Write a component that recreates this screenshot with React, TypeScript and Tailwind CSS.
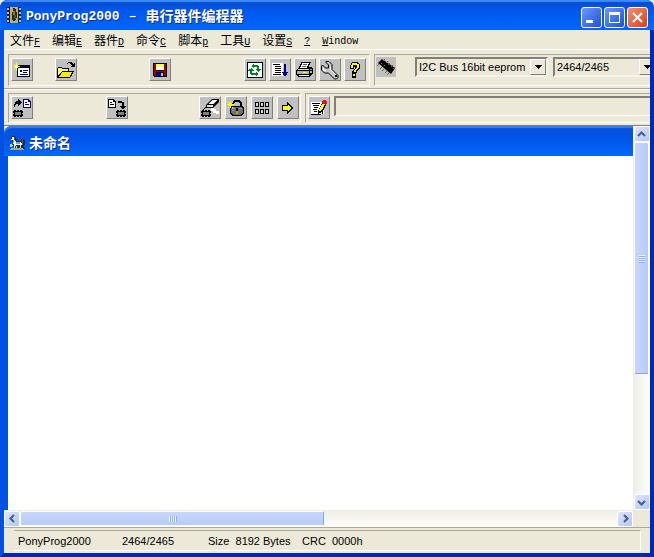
import React, { useState } from 'react';

const Icon: React.FC<{ children: React.ReactNode }> = ({ children }) => (
  <svg viewBox="0 0 20 20" className="h-5 w-5 shrink-0" shapeRendering="crispEdges" aria-hidden="true">
    {children}
  </svg>
);

const ToolButton: React.FC<{ label: string; className?: string; children: React.ReactNode }> = ({ label, className = '', children }) => (
  <button
    type="button"
    aria-label={label}
    className={`flex h-[23px] w-[22px] shrink-0 items-center justify-center border border-t-white border-l-white border-r-[#808080] border-b-[#808080] bg-[#c0c0c0] active:border-[#808080] ${className}`}
  >
    <Icon>{children}</Icon>
  </button>
);

// small IC package, shared by the read / write / erase icons
const Chip: React.FC<{ x: number; y: number }> = ({ x, y }) => (
  <g transform={`translate(${x} ${y})`}>
    <path d="M1 0h2v1h1v-1h2v1h1v-1h2v1h1v2h-1v1h1v2h-1v1h-2v-1h-1v1h-2v-1h-1v1h-2v-1h-1v-2h1v-1h-1v-2h1z" fill="#000" />
    <path d="M2 2h6v3h-6z" fill="#808080" />
  </g>
);

const Page: React.FC<{ x: number; y: number; color: string }> = ({ x, y, color }) => (
  <g transform={`translate(${x} ${y})`}>
    <path d="M0 0h5l3 3v6h-8z" fill={color} />
    <path d="M1 1h4v2h2v5h-6z" fill="#fff" />
    <path d="M2 3h2v1h-2zM2 5h4v1h-4z" fill={color} />
  </g>
);

const NewIcon = () => (
  <>
    <path d="M5 5h13v12h-13z" fill="#000" />
    <path d="M6 8h11v8h-11z" fill="#fff" />
    <path d="M6 6h11v1h-11z" fill="#000080" />
    <path d="M8 10h2v2h-2zM11 10h5v1h-5zM11 12h4v1h-4zM8 14h8v1h-8z" fill="#000060" />
    <path d="M4 2h1v9h-1zM1 6h7v1h-7zM2 4h1v1h-1zM6 4h1v1h-1zM2 8h1v1h-1zM6 8h1v1h-1z" fill="#ffff00" />
    <path d="M3 5h3v3h-3z" fill="#ffffa0" />
  </>
);

const OpenIcon = () => (
  <>
    <path d="M1 8h1v-1h4v1h7v3h5v1h-1v2h-1v2h-1v1h-1v1h-13z" fill="#000" />
    <path d="M2 8h4v1h6v2h-6v1h-1v1h-1v1h-1v1h-1z" fill="#ffff60" />
    <path d="M6 12h10v1h-1v2h-1v2h-11v-1h1v-1h1v-2h1z" fill="#f0f000" />
    <path d="M11 3h1v-1h4v1h1v1h1v-1h1v4h-4v-1h1v-1h-1v-1h-1v-1h-2v1h-1z" fill="#000" />
  </>
);

const SaveIcon = () => (
  <>
    <path d="M3 3h14v14h-13l-1-1z" fill="#000" />
    <path d="M4 4h2v7h8v-7h2v12h-2v-4h-8v4h-2z" fill="#a00000" />
    <path d="M6 4h8v3h-8z" fill="#ffff60" />
    <path d="M6 7h8v3h-8z" fill="#fff" />
    <path d="M7 13h4v3h-4z" fill="#0000c0" />
    <path d="M11 13h2v3h-2z" fill="#c0c0c0" />
  </>
);

const ReloadIcon = () => (
  <>
    <path d="M2 2h16v16h-16z" fill="#000" />
    <path d="M3 3h14v14h-14z" fill="#fff" />
    <path d="M8 5h5v1h1v3h2v1h-1v1h-1v1h-1v-1h-1v-1h-1v-1h1v-2h-4zM6 8h1v1h1v1h1v1h-2v2h4v2h-5v-1h-1v-3h-2v-1h1v-1h1z" fill="#008020" />
    <path d="M8 4h1v4h-1v-1h-1v-2h1zM11 12h1v1h1v2h-1v1h-1z" fill="#008020" />
  </>
);

const ListIcon = () => (
  <>
    <path d="M2 3h11v13h-11z" fill="#fff" />
    <path d="M3 4h7v1h-7zM5 6h6v1h-6zM5 8h6v1h-6zM5 10h6v1h-6zM5 12h6v1h-6zM3 14h8v1h-8z" fill="#000" />
    <path d="M14 4h2v8h2v1h-1v2h-1v1h-2v-1h-1v-2h-1v-1h2z" fill="#000080" />
  </>
);

const PrintIcon = () => (
  <>
    <path d="M6 2h10v1h-1v2h-1v2h3v1h1v6h-1v1h-1v1h-1v1h-12v-1h-1v-1h-1v-5h1v-1h1v-1h1v-2h1v-2h1z" fill="#000" />
    <path d="M7 3h7v1h-1v2h-1v2h-7v-1h1v-2h1z" fill="#fff" />
    <path d="M8 4h4v1h-4zM7 6h4v1h-4z" fill="#606060" />
    <path d="M3 9h11v1h-11z" fill="#d8d8d8" />
    <path d="M2 11h12v3h-12zM15 9h2v1h-2zM15 11h2v2h-2z" fill="#b0b0b0" />
    <path d="M8 12h4v1h-4z" fill="#ffff00" />
    <path d="M4 15h10v1h-10z" fill="#fff" />
  </>
);

const WrenchIcon = () => (
  <>
    <path
      d="M6 1.500h3l3 3v5l6 6v2l-1.500 1.500h-2l-6-6h-4l-3-3v-4l1-1 3 3h3v-3l-3-3z"
      fill="#c8c8c8"
      stroke="#000"
      strokeWidth="1"
      shapeRendering="geometricPrecision"
    />
    <path d="M10 7h1v3h1v1h1v1h1v1h1v1h1v1h-1v-1h-1v-1h-1v-1h-1v-1h-1v-1h-1zM3 8h1v2h2v1h-3z" fill="#fff" />
    <path d="M15 15h2v2h-2z" fill="#000" />
  </>
);

const HelpIcon = () => (
  <>
    <path d="M6 2h7v1h1v1h1v5h-1v1h-1v1h-1v2h-1v5h-4v-7h1v-1h1v-1h1v-2h-1v2h-4v-4h1v-2h1z" fill="#000" />
    <path d="M7 3h5v1h2v4h-1v1h-1v1h-1v2h-2v-2h1v-1h1v-1h1v-3h-4v3h-2v-3h1zM8 14h2v2h-2z" fill="#ffff00" />
  </>
);

const DeviceIcon = () => (
  <>
    <path d="M2 6l4-4 13 9-4 6z" fill="#000" shapeRendering="geometricPrecision" />
    <path
      d="M7 4l2-2M10 6l2-2M12 8l2-2M15 10l2-2M17 12l2-2M3 7l-2 2M6 10l-2 2M8 12l-2 2M11 14l-2 2M13 16l-2 2"
      stroke="#806800"
      strokeWidth="1"
      shapeRendering="geometricPrecision"
    />
    <path d="M5 6h1v1h-1zM8 8h1v1h-1z" fill="#808080" />
  </>
);

const ReadIcon = () => (
  <>
    <path d="M2 9v-3h1v-2h1v-1h2v-2h1v1h1v1h1v1h1v1h-1v1h-1v1h-1v1h-1v-2h-2v1h-1v2z" fill="#000" />
    <Page x={11} y={1} color="#000080" />
    <Chip x={1} y={12} />
  </>
);

const WriteIcon = () => (
  <>
    <Page x={1} y={1} color="#000" />
    <path d="M11 3h4v1h2v4h2v1h-1v1h-1v1h-2v-1h-1v-1h-1v-1h2v-3h-4z" fill="#000" />
    <Chip x={9} y={12} />
  </>
);

const EraseIcon = () => (
  <>
    <path d="M11 10h3v1h2v2h3v3h-3v-1h-3v-2h-2z" fill="#fff" />
    <path d="M6 7l6-6h7v3l-6 6h-7z" fill="#000" shapeRendering="geometricPrecision" />
    <path d="M8.500 6l4-4h5l-4 4z" fill="#fff" shapeRendering="geometricPrecision" />
    <path d="M7 7h6v2h-6z" fill="#e0e0e0" />
    <path d="M5 9h1v1h-1zM4 10h1v1h-1zM3 11h1v1h-1z" fill="#000" />
    <Chip x={1} y={12} />
  </>
);

const LockIcon = () => (
  <>
    <path d="M7 3h1v-1h6v1h1v1h1v4h-2v-3h-1v-1h-4v1h-1v2h-2v-3h1z" fill="#000" />
    <path d="M5 8h12v1h1v7h-1v1h-1v1h-10v-1h-1v-1h-1v-7h1z" fill="#000" />
    <path d="M6 9h10v1h1v5h-1v1h-1v1h-8v-1h-1v-1h-1v-5h1z" fill="#707070" />
    <path d="M6 10h3v1h-3zM6 12h2v1h-2zM13 10h3v1h-3z" fill="#a0a0a0" />
    <path d="M10 10h2v3h-2z" fill="#000" />
    <path d="M10 13h2v3h-2z" fill="#c0a000" />
    <path d="M4 3h1v7h-1zM1 6h7v1h-7zM2 4h1v1h-1zM6 4h1v1h-1zM2 9h1v1h-1zM6 9h1v1h-1zM3 5h3v3h-3z" fill="#ffff00" />
  </>
);

const FuseIcon = () => (
  <>
    {[4, 11].map(y =>
      [3, 8, 13].map(x => (
        <g key={`${x}-${y}`}>
          <path d={`M${x} ${y}h4v5h-4z`} fill="#000" />
          <path d={`M${x + 1} ${y + 1}h2v3h-2z`} fill="#d8d8d8" />
        </g>
      ))
    )}
  </>
);

const RunIcon = () => (
  <>
    <path d="M4 7h5v-3h1v1h1v1h1v1h1v1h1v1h1v2h-1v1h-1v1h-1v1h-1v1h-1v1h-1v-3h-5z" fill="#000" />
    <path d="M5 8h5v-1h1v1h1v1h1v2h-1v1h-1v1h-1v-1h-5z" fill="#ffff00" />
  </>
);

const EditIcon = () => (
  <>
    <path d="M2 4h13v12h-3v1h-10z" fill="#fff" />
    <path d="M3 5h8v1h-8zM4 7h6v1h-6zM5 9h4v1h-4zM4 11h4v1h-4zM5 13h3v1h-3zM2 16h10v1h-10zM13 12h1v4h-1z" fill="#000" />
    <path d="M13 3h5v3h-1v2h-1v2h-1v2h-1v1h-1v1h-1v1h-2v1h-1v-4h1v-2h1v-2h1v-2h1z" fill="#000" />
    <path d="M13 6h3v1h-1v2h-1v2h-1v1h-1v1h-2v-2h1v-2h1v-2h1z" fill="#ffff00" />
    <path d="M14 2h3v1h1v3h-1v1h-1v-1h-2v-1h-1v-2h1z" fill="#e01020" />
  </>
);

const AppIcon = () => (
  <svg viewBox="0 0 14 16" className="h-4 w-3.5 shrink-0" shapeRendering="crispEdges" aria-hidden="true">
    <path d="M0 0h14v16h-14z" fill="#202018" />
    <path d="M3 0h8v16h-8z" fill="#a8b098" />
    <path d="M0 1h2v2h-2zM0 5h2v2h-2zM0 9h2v2h-2zM0 13h2v2h-2zM12 1h2v2h-2zM12 5h2v2h-2zM12 9h2v2h-2zM12 13h2v2h-2z" fill="#b8b8b0" />
    <path d="M6 1h2v1h1v3h1v6h-1v2h-1v1h-2v-1h-1v-8h1z" fill="#302808" />
    <path d="M6 4h2v4h-2z" fill="#b87010" />
    <path d="M7 8h2v4h-2z" fill="#386018" />
  </svg>
);

const PonyIcon = () => (
  <svg viewBox="0 0 16 16" className="h-4 w-4 shrink-0" shapeRendering="crispEdges" aria-hidden="true">
    <path d="M2 2h1v-1h3v1h1v2h1v2h4v-2h3v1h1v5h-1v3h1v1h-12v-1h2v-2h-2v-4h-1v-2h-1z" fill="#183040" />
    <path d="M3 2h2v1h1v3h1v1h5v1h1v2h-1v1h-1v-1h-4v1h-1v2h-1v-4h-1v-4h-2v-1h1z" fill="#e8f4ec" />
    <path d="M7 7h4v2h-4zM4 5h1v3h-1z" fill="#70b0a8" />
    <path d="M5 2h1v3h-1zM13 4h1v6h-1z" fill="#785030" />
    <path d="M1 9h2v1h1v1h-1v1h-2zM11 10h1v3h-1zM7 11h1v2h-1z" fill="#c0d8d0" />
    <path d="M2 13h12v1h1v1h-14v-1h1z" fill="#a0a898" />
  </svg>
);

const menus = [
  { text: '文件', key: 'F' },
  { text: '编辑', key: 'E' },
  { text: '器件', key: 'D' },
  { text: '命令', key: 'C' },
  { text: '脚本', key: 'p' },
  { text: '工具', key: 'U' },
  { text: '设置', key: 'S' },
  { text: '', key: '?' },
  { text: '', key: 'W', rest: 'indow' },
];

const DropDown: React.FC<{ label: string; value: string; options: string[]; onChange: (v: string) => void; className: string }> = ({ label, value, options, onChange, className }) => (
  <div className={`relative h-5 shrink-0 border-2 border-t-[#808078] border-l-[#808078] border-r-[#f6f4ea] border-b-[#f6f4ea] ${className}`}>
    <select
      aria-label={label}
      value={value}
      onChange={e => onChange(e.target.value)}
      className="block h-4 w-full appearance-none bg-[#ece9d8] pl-0.5 text-[11px] leading-4 text-black outline-none"
    >
      {options.map(o => <option key={o}>{o}</option>)}
    </select>
    <span className="pointer-events-none absolute top-0 right-0 flex h-4 w-4 items-center justify-center border border-t-white border-l-white border-r-[#808078] border-b-[#808078] bg-[#ece9d8]">
      <svg viewBox="0 0 7 4" className="h-1 w-[7px]" shapeRendering="crispEdges">
        <path d="M0 0h7v1h-1v1h-1v1h-1v1h-1v-1h-1v-1h-1v-1h-1z" fill="#000" />
      </svg>
    </span>
  </div>
);

const arrows = {
  up: 'M1 6l3.500-3.500L8 6',
  down: 'M1 3l3.500 3.500L8 3',
  left: 'M6 1L2.500 4.500 6 8',
  right: 'M3 1l3.500 3.500L3 8',
};

const ScrollButton: React.FC<{ dir: keyof typeof arrows }> = ({ dir }) => (
  <button
    type="button"
    aria-label={`Scroll ${dir}`}
    className="flex h-4 w-4 shrink-0 items-center justify-center rounded-xs border border-white bg-linear-to-br from-[#dce6fe] to-[#b2c6f8]"
  >
    <svg viewBox="0 0 9 9" className="h-[9px] w-[9px]">
      <path d={arrows[dir]} fill="none" stroke="#4d6185" strokeWidth="2.200" />
    </svg>
  </button>
);

const group = 'flex border-t border-l border-t-[#aca899] border-l-[#aca899] border-b border-b-white';
const caption = 'bg-linear-to-b from-[#0c50d8] via-[#0054e6] via-40% to-[#0468fc]';
const captionButton = 'flex h-[21px] w-[21px] items-center justify-center rounded-[3px] border border-white';

const App: React.FC = () => {
  const [bus, setBus] = useState('I2C Bus 16bit eeprom');
  const [device, setDevice] = useState('2464/2465');

  return (
    <div className="min-h-screen bg-[#e4ecf8] font-['Liberation_Sans','Noto_Sans_CJK_SC',sans-serif] text-black">
      <div className="flex min-h-screen flex-col overflow-hidden rounded-t-lg bg-[#0842d8]">
        <header className="flex h-[30px] items-center bg-linear-to-b from-[#0848c8] via-[#0058ee] via-35% to-[#0266fc] pr-1.5 pl-[7px] shadow-[inset_0_2px_1px_#3c8cf8]">
          <AppIcon />
          <h1 className="ml-[5px] flex flex-1 gap-[9px] pt-1 font-['Liberation_Mono','Noto_Sans_CJK_SC',monospace] text-[13px] leading-5 font-bold whitespace-nowrap text-white [text-shadow:1px_1px_#0a2c90]">
            <span>PonyProg2000</span>
            <span>–</span>
            <span className="text-sm leading-5">串行器件编程器</span>
          </h1>
          <div className="flex gap-0.5 pt-1">
            <button type="button" aria-label="Minimize" className={`${captionButton} bg-linear-to-br from-[#6c98f8] to-[#1c50d8]`}>
              <svg viewBox="0 0 19 19" className="h-[19px] w-[19px]"><path d="M4 12h7v3H4z" fill="#fff" /></svg>
            </button>
            <button type="button" aria-label="Maximize" className={`${captionButton} bg-linear-to-br from-[#6c98f8] to-[#1c50d8]`}>
              <svg viewBox="0 0 19 19" className="h-[19px] w-[19px]"><path d="M4 4h11v11H4zM5 7v7h9V7z" fillRule="evenodd" fill="#fff" /></svg>
            </button>
            <button type="button" aria-label="Close" className={`${captionButton} bg-linear-to-br from-[#f0906c] to-[#d83c14]`}>
              <svg viewBox="0 0 19 19" className="h-[19px] w-[19px]"><path d="M5 5l9 9M14 5l-9 9" stroke="#fff" strokeWidth="2" /></svg>
            </button>
          </div>
        </header>

        <div className="flex flex-1 flex-col border-x-4 border-b-4 border-r-[#0028b8] border-b-[#0028b8] border-l-[#0450e0] bg-[#ece9d8]">
          <nav className="flex h-5 border-b border-white">
            {menus.map(m => (
              <button
                key={m.key}
                type="button"
                className="flex items-baseline px-1.5 pt-0.5 font-['Liberation_Mono','Noto_Sans_CJK_SC',monospace] text-[10px] leading-5 hover:bg-[#316ac5] hover:text-white"
              >
                {m.text && <span className="text-xs leading-5">{m.text}</span>}
                <span className="underline">{m.key}</span>
                {m.rest}
              </button>
            ))}
          </nav>

          <div className="flex h-[39px] gap-1 overflow-hidden border-b border-[#aca899] pt-1 pb-0.5 pl-1">
            <div className={`${group} w-[362px] shrink-0 border-r border-r-white pt-[3px] pl-0.5`}>
              <ToolButton label="New"><NewIcon /></ToolButton>
              <ToolButton label="Open" className="ml-[22px]"><OpenIcon /></ToolButton>
              <ToolButton label="Save" className="ml-[72px]"><SaveIcon /></ToolButton>
              <div className="ml-[73px] flex gap-[3px]">
                <ToolButton label="Reload"><ReloadIcon /></ToolButton>
                <ToolButton label="Device list"><ListIcon /></ToolButton>
                <ToolButton label="Print"><PrintIcon /></ToolButton>
                <ToolButton label="Options"><WrenchIcon /></ToolButton>
                <ToolButton label="Help"><HelpIcon /></ToolButton>
              </div>
            </div>
            <div className={`${group} min-w-0 flex-1 overflow-hidden pt-0.5 pl-px`}>
              <span className="mr-[19px] h-5 bg-[#c0c0c0]"><Icon><DeviceIcon /></Icon></span>
              <DropDown label="Bus" value={bus} options={['I2C Bus 16bit eeprom', 'I2C Bus 8bit eeprom']} onChange={setBus} className="mr-[5px] w-[133px]" />
              <DropDown label="Device" value={device} options={['2464/2465', '24128']} onChange={setDevice} className="w-[104px]" />
            </div>
          </div>

          <div className="flex h-[37px] gap-1 overflow-hidden border-t border-b border-t-white border-b-[#808078] pt-[3px] pb-0.5 pl-1">
            <div className={`${group} w-[293px] shrink-0 border-r border-r-white pt-0.5 pl-0.5`}>
              <ToolButton label="Read device"><ReadIcon /></ToolButton>
              <ToolButton label="Write device" className="ml-[73px]"><WriteIcon /></ToolButton>
              <div className="ml-[71px] flex gap-1">
                <ToolButton label="Erase"><EraseIcon /></ToolButton>
                <ToolButton label="Security bits"><LockIcon /></ToolButton>
                <ToolButton label="Configuration bits"><FuseIcon /></ToolButton>
                <ToolButton label="Run script"><RunIcon /></ToolButton>
              </div>
            </div>
            <div className={`${group} min-w-0 flex-1 pt-0.5 pl-0.5`}>
              <ToolButton label="Edit note"><EditIcon /></ToolButton>
              <input
                aria-label="Note"
                readOnly
                className="ml-1 h-5 min-w-0 flex-1 border-t-2 border-b border-l-2 border-t-[#808078] border-b-white border-l-[#808078] bg-transparent px-1 text-[11px] outline-none"
              />
            </div>
          </div>

          <main className="flex flex-1 flex-col">
            <div className="flex flex-1">
              <section className="flex flex-1 flex-col rounded-tl-lg bg-[#0450e0]">
                <h2 className={`${caption} flex h-[30px] items-center gap-1 rounded-tl-lg pt-1 pl-[5px] text-[13px] font-bold text-white shadow-[inset_0_2px_1px_#2c80f8] [text-shadow:1px_1px_#0a2c90]`}>
                  <PonyIcon />
                  <span className="text-sm">未命名</span>
                </h2>
                <div className="ml-1 flex-1 bg-white" />
              </section>
              <div className="flex w-[17px] flex-col items-center bg-linear-to-r from-[#eeede5] to-[#fefefb]">
                <ScrollButton dir="up" />
                <div className="w-full flex-1 px-px">
                  <div className="flex h-[66%] flex-col items-center justify-center gap-px rounded-xs border border-white border-b-[#8ca4dc] bg-linear-to-r from-[#c8d6fb] to-[#b8cbf8]">
                    {[0, 1, 2, 3].map(i => <i key={i} className="h-px w-1.5 bg-[#eef4fe] shadow-[0_1px_#8cb0f8]" />)}
                  </div>
                </div>
                <ScrollButton dir="down" />
              </div>
            </div>
            <div className="flex h-[17px]">
              <div className="flex flex-1 items-center bg-linear-to-b from-[#eeede5] to-[#fefefb]">
                <ScrollButton dir="left" />
                <div className="h-full flex-1 py-px">
                  <div className="flex h-full w-[51%] items-center justify-center gap-px rounded-xs border border-white border-r-[#8ca4dc] bg-linear-to-b from-[#c8d6fb] to-[#b8cbf8]">
                    {[0, 1, 2, 3].map(i => <i key={i} className="h-1.5 w-px bg-[#eef4fe] shadow-[1px_0_#8cb0f8]" />)}
                  </div>
                </div>
                <ScrollButton dir="right" />
              </div>
              <div className="w-[17px]" />
            </div>
          </main>

          <footer className="h-[26px] border-t border-[#aca899] pt-0.5 pr-[9px] pl-2.5">
            <div className="flex h-[21px] border border-t-[#aca899] border-r-white border-b-white border-l-transparent text-[11px] leading-5 whitespace-pre">
              <span className="w-[105px] pl-[3px]">PonyProg2000</span>
              <span className="w-[85px] pl-0.5">2464/2465</span>
              <span className="w-[94px] pl-[3px]">Size  8192 Bytes</span>
              <span className="pl-[3px]">CRC  0000h</span>
            </div>
          </footer>
        </div>
      </div>
    </div>
  );
};

export default App;
